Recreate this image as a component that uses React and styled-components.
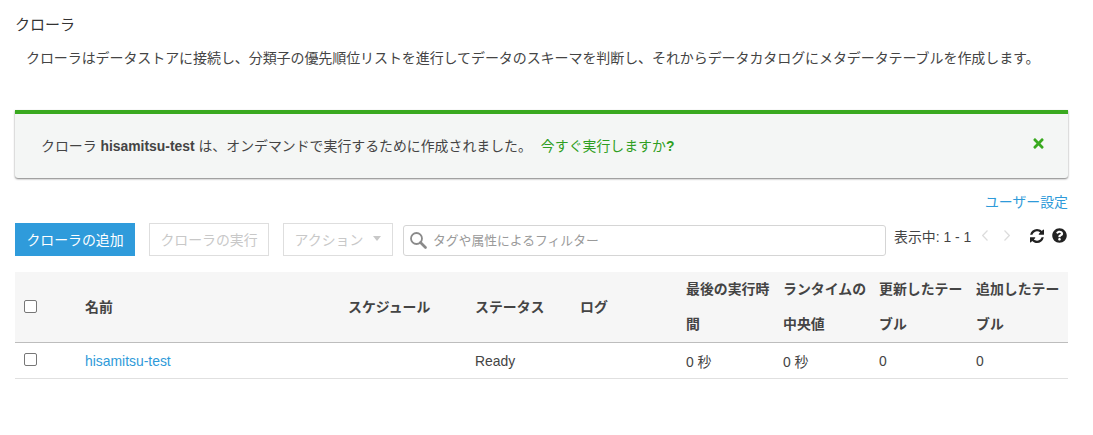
import styled, { createGlobalStyle } from 'styled-components'
import { FaTimes, FaQuestionCircle } from 'react-icons/fa'

const GlobalStyle = createGlobalStyle`
  body {
    margin: 0;
    background: #fff;
    color: #444;
    font-family: "Liberation Sans", "Noto Sans CJK JP", sans-serif;
    font-size: 13.9px;
  }
`;

const Page = styled.div`
  padding: 15px 25px 0 15px;
`;

const Title = styled.h1`
  margin: 0;
  font-size: 15px;
  line-height: 20px;
  font-weight: 400;
  color: #333;
`;

const Description = styled.p`
  margin: 13px 0 0 11px;
  font-size: 14px;
  letter-spacing: -0.08px;
  line-height: 20px;
  color: #444;
`;

const Alert = styled.div`
  display: flex;
  align-items: center;
  justify-content: space-between;
  height: 68px;
  margin-top: 42px;
  padding: 0 23px 2px 26px;
  box-sizing: border-box;
  background: #f4f6f5;
  border-top: 4px solid #39a91f;
  border-radius: 0 0 3px 3px;
  box-shadow: 0 1px 2px 0 rgba(0, 0, 0, 0.5);
`;

const AlertLink = styled.a`
  margin-left: 9px;
  color: #2f9e22;
`;

const CloseIcon = styled(FaTimes)`
  color: #39a91f;
  width: 13px;
  height: 15px;
  margin-bottom: 4px;
`;

const SettingsRow = styled.div`
  display: flex;
  justify-content: flex-end;
  margin-top: 14px;
  line-height: 20px;
`;

const TextLink = styled.a`
  color: #2e9ad9;
`;

const Toolbar = styled.div`
  display: flex;
  align-items: center;
  margin-top: 11px;
  height: 33px;
`;

const Button = styled.button`
  display: flex;
  flex: none;
  align-items: center;
  justify-content: center;
  gap: 10px;
  box-sizing: border-box;
  height: 33px;
  width: ${(p) => p.$width}px;
  margin-right: ${(p) => p.$gap}px;
  padding: 0 0 2px;
  border: ${(p) => (p.$primary ? 'none' : '1px solid #dedede')};
  background: ${(p) => (p.$primary ? '#2f9bdb' : '#fff')};
  color: ${(p) => (p.$primary ? '#fff' : '#c8c8c8')};
  font-family: inherit;
  font-size: 13.9px;
`;

const Caret = styled.span`
  width: 0;
  height: 0;
  border-left: 4.5px solid transparent;
  border-right: 4.5px solid transparent;
  border-top: 5px solid #c8c8c8;
`;

const SearchBox = styled.div`
  display: flex;
  flex: none;
  align-items: center;
  gap: 6px;
  width: 483px;
  height: 31px;
  margin-top: 1px;
  padding: 0 0 1px 5px;
  box-sizing: border-box;
  border: 1px solid #d5d5d5;
  border-radius: 3px;
  color: #9a9a9a;
  font-size: 12.8px;
`;

const Pager = styled.div`
  display: flex;
  flex: none;
  align-items: center;
  margin: 0 0 8px 8px;
  white-space: nowrap;
  color: #444;
`;

const PagerArrow = styled.svg`
  display: block;
  width: 6px;
  height: 11px;
  margin-left: ${(p) => p.$left}px;
  fill: none;
  stroke: #dcdcdc;
  stroke-width: 1.2;
`;

const ToolIcon = styled.span`
  display: flex;
  margin-left: ${(p) => p.$left}px;
  color: #222;
  font-size: 15px;
`;

const Table = styled.table`
  width: 100%;
  margin-top: 16px;
  border-collapse: collapse;
  table-layout: fixed;
`;

const HeadCell = styled.th`
  height: 70px;
  padding: 0 4px 0 ${(p) => p.$pad ?? 8}px;
  background: #f6f6f6;
  border-bottom: 1px solid #bdbdbd;
  text-align: left;
  font-weight: 700;
  line-height: 35px;
  color: #444;
`;

const Cell = styled.td`
  height: 35px;
  padding: 0 0 0 ${(p) => p.$pad ?? 8}px;
  border-bottom: 1px solid #e0e0e0;
  color: #444;
`;

const RowLink = styled.a`
  color: #2e9ad9;
`;

const Checkbox = styled.span`
  display: block;
  width: 11px;
  height: 11px;
  margin-top: -2px;
  border: 1px solid #777;
  border-radius: 2px;
  background: #fff;
`;

const columns = [
  { label: null, width: 62 },
  { label: '名前', width: 263 },
  { label: 'スケジュール', width: 127 },
  { label: 'ステータス', width: 105 },
  { label: 'ログ', width: 106 },
  { label: '最後の実行時間', width: 97 },
  { label: 'ランタイムの中央値', width: 96 },
  { label: '更新したテーブル', width: 97 },
  { label: '追加したテーブル', width: 100 },
];

function SearchIcon() {
  return (
    <svg width="18" height="18" viewBox="0 0 18 18" fill="none" stroke="#8a8a8a">
      <circle cx="7.5" cy="7.5" r="5.5" strokeWidth="1.8" />
      <path d="M11.5 11.5 16.5 16.5" strokeWidth="2.6" strokeLinecap="round" />
    </svg>
  );
}

function RefreshIcon() {
  return (
    <svg width="14" height="14" viewBox="0 0 1536 1536" fill="currentColor">
      <path d="M1511 928q0 5-1 7-64 268-268 434.5t-478 166.5q-146 0-282.5-55t-243.5-157l-129 129q-19 19-45 19t-45-19-19-45v-448q0-26 19-45t45-19h448q26 0 45 19t19 45-19 45l-137 137q71 66 161 102t187 36q134 0 250-65t186-179q11-17 53-117 8-23 30-23h192q13 0 22.5 9.5t9.5 22.5zm25-800v448q0 26-19 45t-45 19h-448q-26 0-45-19t-19-45 19-45l138-138q-148-137-349-137-134 0-250 65t-186 179q-11 17-53 117-8 23-30 23h-199q-13 0-22.5-9.5t-9.5-22.5v-7q65-268 270-434.5t480-166.5q146 0 284 55.5t245 156.5l130-129q19-19 45-19t45 19 19 45z" />
    </svg>
  );
}

function App() {
  return (
    <Page>
      <GlobalStyle />
      <Title>クローラ</Title>
      <Description>
        クローラはデータストアに接続し、分類子の優先順位リストを進行してデータのスキーマを判断し、それからデータカタログにメタデータテーブルを作成します。
      </Description>

      <Alert>
        <span>
          クローラ <b>hisamitsu-test</b> は、オンデマンドで実行するために作成されました。
          <AlertLink>今すぐ実行しますか<b>?</b></AlertLink>
        </span>
        <CloseIcon />
      </Alert>

      <SettingsRow>
        <TextLink>ユーザー設定</TextLink>
      </SettingsRow>

      <Toolbar>
        <Button $primary $width={120} $gap={14}>クローラの追加</Button>
        <Button $width={120} $gap={14}>クローラの実行</Button>
        <Button $width={110} $gap={10}>アクション<Caret /></Button>
        <SearchBox>
          <SearchIcon />
          タグや属性によるフィルター
        </SearchBox>
        <Pager>
          表示中: 1 - 1
          <PagerArrow $left={11} viewBox="0 0 6 11"><path d="M5.5 0.5 0.7 5.5 5.5 10.5" /></PagerArrow>
          <PagerArrow $left={16} viewBox="0 0 6 11"><path d="M0.5 0.5 5.3 5.5 0.5 10.5" /></PagerArrow>
          <ToolIcon $left={20}><RefreshIcon /></ToolIcon>
          <ToolIcon $left={8}><FaQuestionCircle /></ToolIcon>
        </Pager>
      </Toolbar>

      <Table>
        <colgroup>
          {columns.map((c, i) => <col key={i} style={{ width: c.width }} />)}
        </colgroup>
        <thead>
          <tr>
            <HeadCell $pad={9}><Checkbox /></HeadCell>
            {columns.slice(1).map((c) => <HeadCell key={c.label}>{c.label}</HeadCell>)}
          </tr>
        </thead>
        <tbody>
          <tr>
            <Cell $pad={9}><Checkbox /></Cell>
            <Cell><RowLink>hisamitsu-test</RowLink></Cell>
            <Cell />
            <Cell>Ready</Cell>
            <Cell />
            <Cell>0 秒</Cell>
            <Cell>0 秒</Cell>
            <Cell>0</Cell>
            <Cell>0</Cell>
          </tr>
        </tbody>
      </Table>
    </Page>
  );
}

export default App
